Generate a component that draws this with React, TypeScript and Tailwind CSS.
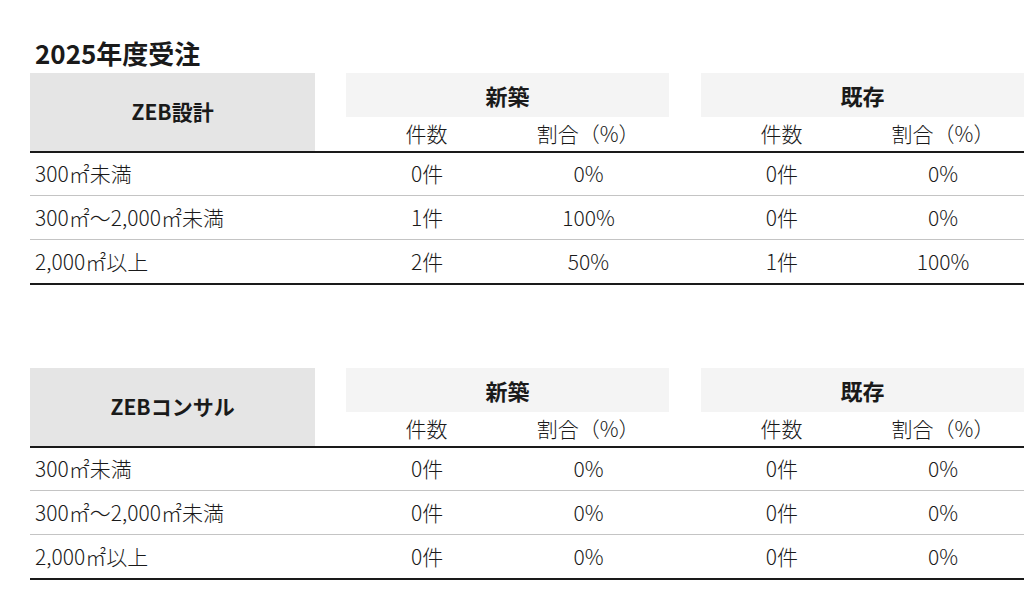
import React from "react";

type Row = { label: string; a: [string, string]; b: [string, string] };

const table1: Row[] = [
  { label: "300㎡未満", a: ["0件", "0%"], b: ["0件", "0%"] },
  { label: "300㎡〜2,000㎡未満", a: ["1件", "100%"], b: ["0件", "0%"] },
  { label: "2,000㎡以上", a: ["2件", "50%"], b: ["1件", "100%"] },
];

const table2: Row[] = [
  { label: "300㎡未満", a: ["0件", "0%"], b: ["0件", "0%"] },
  { label: "300㎡〜2,000㎡未満", a: ["0件", "0%"], b: ["0件", "0%"] },
  { label: "2,000㎡以上", a: ["0件", "0%"], b: ["0件", "0%"] },
];

function Group({ title }: { title: string }) {
  return (
    <div className="flex flex-col w-[323px]">
      <div className="h-[44px] bg-[#f4f4f4] flex items-center justify-center font-bold text-[22px]">
        {title}
      </div>
      <div className="h-[34px] flex items-center font-light">
        <div className="w-[161px] text-center">件数</div>
        <div className="w-[162px] text-center">割合（%）</div>
      </div>
    </div>
  );
}

function Table({ name, rows }: { name: string; rows: Row[] }) {
  const heights = ["h-[43px]", "h-[44px]", "h-[43px]"];
  return (
    <div className="w-[994px]">
      <div className="flex h-[78px]">
        <div className="w-[286px] bg-[#e5e5e5] flex items-center justify-center font-bold text-[21px]">
          {name}
        </div>
        <div className="w-[31px]" />
        <Group title="新築" />
        <div className="w-[32px]" />
        <Group title="既存" />
      </div>
      <div className="border-t-2 border-b-2 border-[#1a1a1a] divide-y divide-[#c4c4c4] font-light">
        {rows.map((r, i) => (
          <div key={i} className={`flex items-center ${heights[i]}`}>
            <div className="w-[317px] pl-[5px]">{r.label}</div>
            <div className="w-[161px] text-center">{r.a[0]}</div>
            <div className="w-[162px] text-center">{r.a[1]}</div>
            <div className="w-[32px]" />
            <div className="w-[161px] text-center">{r.b[0]}</div>
            <div className="w-[162px] text-center">{r.b[1]}</div>
          </div>
        ))}
      </div>
    </div>
  );
}

export default function App() {
  return (
    <div
      className="w-[1024px] h-[602px] overflow-hidden bg-white text-[#1a1a1a] text-[21px] pl-[30px] pt-[37px]"
      style={{ fontFamily: "'Noto Sans CJK JP', 'Noto Sans', sans-serif" }}
    >
      <div className="h-[32px] leading-[32px] mb-[4px] pl-[5px] font-bold text-[26px]">
        2025年度受注
      </div>
      <Table name="ZEB設計" rows={table1} />
      <div className="h-[83px]" />
      <Table name="ZEBコンサル" rows={table2} />
    </div>
  );
}
